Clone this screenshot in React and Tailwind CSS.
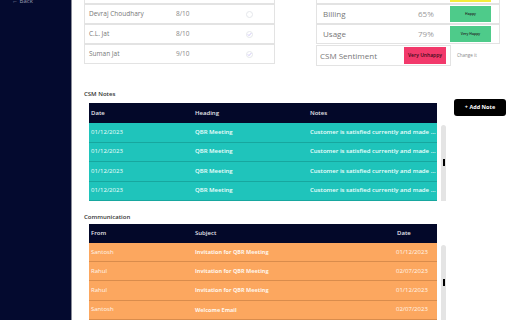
import React from 'react';

const agents = [
  { name: 'Ramesh Kumar', score: '7/10', done: true },
  { name: 'Devraj Choudhary', score: '8/10', done: false },
  { name: 'C.L. Jat', score: '8/10', done: true },
  { name: 'Suman Jat', score: '9/10', done: true },
];

const metrics = [
  { label: 'Product', value: '90%', badge: 'Neutral', color: 'bg-[#f4ec3e]' },
  { label: 'Billing', value: '65%', badge: 'Happy', color: 'bg-[#4ecb8a]' },
  { label: 'Usage', value: '79%', badge: 'Very Happy', color: 'bg-[#4ecb8a]' },
];

const notes = [1, 2, 3, 4, 5].map(() => ({
  date: '01/12/2023',
  heading: 'QBR Meeting',
  note: 'Customer is satisfied currently and made some requests',
}));

const mails = [
  { from: 'Santosh', subject: 'Invitation for QBR Meeting', date: '01/12/2023' },
  { from: 'Rahul', subject: 'Invitation for QBR Meeting', date: '02/07/2023' },
  { from: 'Rahul', subject: 'Invitation for QBR Meeting', date: '01/12/2023' },
  { from: 'Santosh', subject: 'Welcome Email', date: '02/07/2023' },
  { from: 'Rahul', subject: 'Follow up', date: '03/07/2023' },
];

function Check({ on }) {
  return (
    <div className="w-[7px] h-[7px] rounded-full border border-gray-200 flex items-center justify-center">
      {on && (
        <svg viewBox="0 0 10 10" className="w-[7px] h-[7px]" fill="none" stroke="#b8aef0" strokeWidth="1.4">
          <path d="M2 5.2l2 2 4-4.4" strokeLinecap="round" strokeLinejoin="round" />
        </svg>
      )}
    </div>
  );
}

function Scroll({ top }) {
  return (
    <div className="w-[5px] bg-[#e4e4e4] rounded-full ml-[4px] mt-[2px] h-[90px] relative">
      <div className={`absolute left-[2px] w-[2px] h-[7px] bg-black ${top}`} />
    </div>
  );
}

export default function App() {
  return (
    <div className="flex h-[320px] w-[512px] overflow-hidden bg-white text-[#444]" style={{ fontFamily: '"Open Sans", Arial, sans-serif' }}>
      {/* sidebar */}
      <aside className="w-[72px] shrink-0 bg-[#040a2f] border-r border-[#8a8c99]">
        <div className="pl-[12px] -mt-[3px] text-[6px] leading-[8px] text-[#9a9db0]">← Back</div>
      </aside>

      <main className="flex-1 pl-[12px]">
        {/* top blocks */}
        <div className="flex -mt-[16px]">
          <div className="w-[191px]">
            {agents.map((a) => (
              <div key={a.name} className="h-[20px] border border-[#e3e3e3] flex items-center text-[6.5px] text-[#777]">
                <span className="pl-[4px] w-[91px]">{a.name}</span>
                <span className="w-[70px] text-[#888]">{a.score}</span>
                <Check on={a.done} />
              </div>
            ))}
          </div>

          <div className="ml-[41px]">
            {metrics.map((m) => (
              <div key={m.label} className="h-[20px] w-[184px] border border-[#e3e3e3] flex items-center text-[8px] text-[#777]">
                <span className="pl-[6px] w-[101px]">{m.label}</span>
                <span className="w-[32px] text-[#999]">{m.value}</span>
                <span className={`w-[41px] h-[16px] ${m.color} flex items-center justify-center text-[3.5px] text-[#222] font-semibold`}>{m.badge}</span>
              </div>
            ))}
            <div className="flex items-center mt-[1px]">
              <div className="h-[21px] w-[135px] border border-[#e3e3e3] flex items-center justify-between pl-[3px] pr-[4px] text-[8px] text-[#777]">
                <span>CSM Sentiment</span>
                <span className="w-[42px] h-[17px] bg-[#f2396b] flex items-center justify-center text-[5px] font-semibold text-[#3a0a18]">Very Unhappy</span>
              </div>
              <span className="ml-[6px] text-[4.5px] text-[#888]">Change it</span>
            </div>
          </div>
        </div>

        {/* CSM Notes */}
        <div className="flex items-start mt-[24px]">
          <div>
            <div className="text-[6px] leading-[8px] font-semibold text-[#333]">CSM Notes</div>
            <div className="ml-[5px] mt-[5px]">
              <div className="w-[348px] h-[20px] bg-[#030829] flex items-center text-[6px] font-semibold text-[#e4e4ea]">
                <span className="pl-[2px] w-[106px]">Date</span>
                <span className="w-[115px]">Heading</span>
                <span>Notes</span>
              </div>
              <div className="flex h-[78px] overflow-hidden">
                <div className="w-[348px]">
                  {notes.map((n, i) => (
                    <div key={i} className="h-[19.5px] bg-[#1fc4bb] border-b border-[#17a79f] flex items-center text-[6px] text-[#eefffd]">
                      <span className="pl-[2px] w-[106px] shrink-0 font-medium">{n.date}</span>
                      <span className="w-[115px] shrink-0 font-semibold">{n.heading}</span>
                      <span className="flex-1 truncate font-semibold">{n.note}</span>
                    </div>
                  ))}
                </div>
                <Scroll top="top-[34px]" />
              </div>
            </div>
          </div>
          <button className="ml-[8px] mt-[9px] w-[52px] h-[17px] bg-black rounded-[3px] text-white text-[5.5px] font-bold">+ Add Note</button>
        </div>

        {/* Communication */}
        <div className="mt-[12px]">
          <div className="text-[6px] leading-[8px] font-semibold text-[#333]">Communication</div>
          <div className="ml-[5px] mt-[3px]">
            <div className="w-[348px] h-[19px] bg-[#030829] flex items-center text-[6px] font-semibold text-[#e4e4ea]">
              <span className="pl-[2px] w-[106px]">From</span>
              <span className="w-[202px]">Subject</span>
              <span>Date</span>
            </div>
            <div className="flex h-[80px] overflow-hidden">
              <div className="w-[348px]">
                {mails.map((m, i) => (
                  <div key={i} className="h-[19.2px] bg-[#fca75f] border-b border-[#d98c4c] flex items-center text-[6px] text-[#fff6ec]">
                    <span className="pl-[2px] w-[106px] shrink-0">{m.from}</span>
                    <span className="w-[201px] shrink-0 font-bold text-[5.5px]">{m.subject}</span>
                    <span>{m.date}</span>
                  </div>
                ))}
              </div>
              <Scroll top="top-[34px]" />
            </div>
          </div>
        </div>
      </main>
    </div>
  );
}
